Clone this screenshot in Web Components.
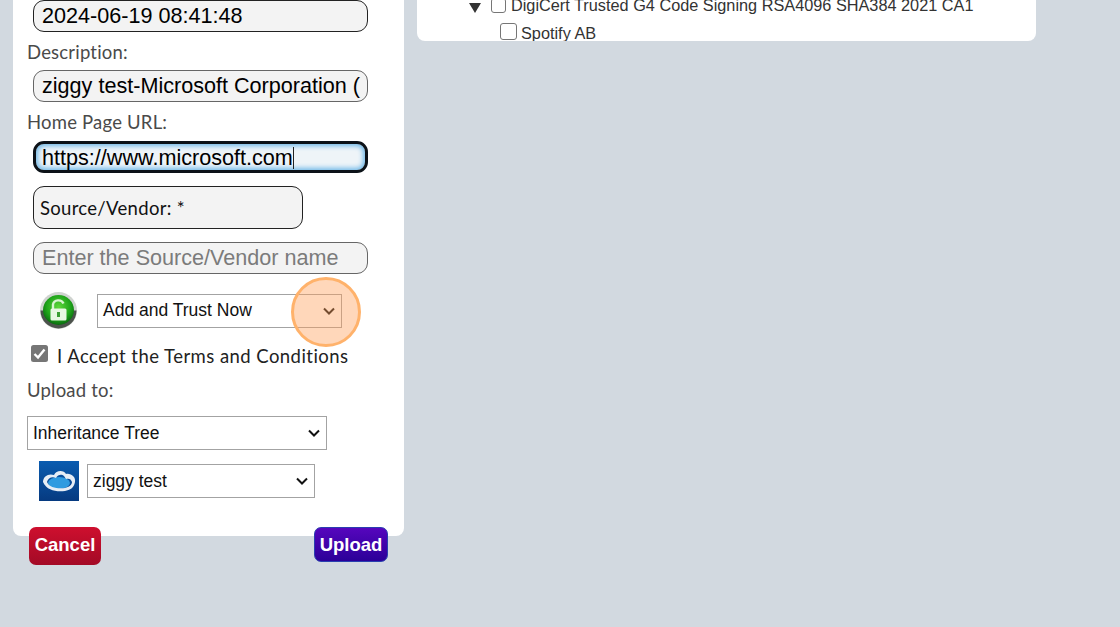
<!DOCTYPE html>
<html>
<head>
<meta charset="utf-8">
<title>Upload</title>
<style>
    html, body { margin: 0; height: 627px; overflow: hidden; background: #d2d9e0; }
</style>
</head>
<body>

<upload-page>
    <upload-form slot="left">
        <text-field style="margin-top:0">2024-06-19 08:41:48</text-field>
        <form-label style="margin-top:9px">Description:</form-label>
        <text-field style="margin-top:7px" muted>ziggy test-Microsoft Corporation (</text-field>
        <form-label style="margin-top:9px">Home Page URL:</form-label>
        <text-field style="margin-top:8px" focused>https://www.microsoft.com</text-field>
        <vendor-box>Source/Vendor: *</vendor-box>
        <text-field style="margin-top:13px" muted placeholder>Enter the Source/Vendor name</text-field>

        <div style="display:flex;align-items:center;height:37px;margin:18px 0 0 12px">
            <lock-icon></lock-icon>
            <pick-list style="width:245px;margin-left:19px" big>Add and Trust Now</pick-list>
        </div>

        <terms-check>I Accept the Terms and Conditions</terms-check>
        <form-label style="margin-top:11px">Upload to:</form-label>
        <pick-list style="width:300px;margin-top:15px">Inheritance Tree</pick-list>

        <div style="display:flex;align-items:center;height:40px;margin:11px 0 0 12px">
            <cloud-icon></cloud-icon>
            <pick-list style="width:228px;margin-left:8px">ziggy test</pick-list>
        </div>

        <div slot="buttons" style="display:flex;justify-content:space-between;align-items:flex-start;margin:27px 16px 0 2px">
            <push-button kind="cancel">Cancel</push-button>
            <push-button kind="upload">Upload</push-button>
        </div>
    </upload-form>

    <cert-tree slot="right">
        <tree-row arrow style="margin-left:52px;margin-top:-9px">DigiCert Trusted G4 Code Signing RSA4096 SHA384 2021 CA1</tree-row>
        <tree-row big style="margin-left:83px;margin-top:2px">Spotify AB</tree-row>
    </cert-tree>
</upload-page>

<click-marker></click-marker>

<script>
class UploadPage extends HTMLElement {
    constructor() {
        super();
        this.shadowDOM = this.attachShadow({mode: "open"});
    }
    connectedCallback() {
        this.shadowDOM.innerHTML = `
        <style>
            :host { display: flex; align-items: flex-start; gap: 13px; padding-left: 13px; }
        </style>
        <slot name="left"></slot>
        <slot name="right"></slot>
        `;
    }
}

class UploadForm extends HTMLElement {
    constructor() {
        super();
        this.shadowDOM = this.attachShadow({mode: "open"});
    }
    connectedCallback() {
        this.shadowDOM.innerHTML = `
        <style>
            :host { display: block; width: 391px; }
            .card {
                box-sizing: border-box;
                height: 536px;
                padding-left: 14px;
                background: #fff;
                border-radius: 0 0 8px 8px;
                display: flex;
                flex-direction: column;
                align-items: flex-start;
            }
            .card ::slotted(*) { flex: none; }
        </style>
        <div class="card"><slot></slot></div>
        <slot name="buttons"></slot>
        `;
        // the buttons hang over the bottom edge of the card
        this.querySelector('[slot="buttons"]').style.margin = "-9px 16px 0 16px";
    }
}

class FormLabel extends HTMLElement {
    constructor() {
        super();
        this.shadowDOM = this.attachShadow({mode: "open"});
    }
    connectedCallback() {
        this.shadowDOM.innerHTML = `
        <style>
            :host {
                display: block;
                height: 22px;
                font: 18.5px/22px Lato, "Open Sans", sans-serif;
                letter-spacing: .2px;
                color: #4a4a4a;
            }
        </style>
        <slot></slot>
        `;
    }
}

class TextField extends HTMLElement {
    constructor() {
        super();
        this.shadowDOM = this.attachShadow({mode: "open"});
    }
    connectedCallback() {
        this.shadowDOM.innerHTML = `
        <style>
            :host {
                display: block;
                box-sizing: border-box;
                width: 335px;
                height: 32px;
                margin-left: 6px;
                padding: 0 8px;
                overflow: hidden;
                white-space: nowrap;
                font: 21.6px/30px "Liberation Sans", Arial, sans-serif;
                color: #000;
                background: #f3f3f3;
                border: 1px solid #222;
                border-radius: 11px;
            }
            :host([muted]) { border-color: #666; }
            :host([placeholder]) { color: #7b7b7b; }
            :host([focused]) {
                border: 3px solid #0c1218;
                padding: 0 6px;
                line-height: 27px;
                background: #eef4f8;
                box-shadow: inset 0 0 5px 2px #6fb8e8;
            }
            .caret { display: inline-block; width: 1px; height: 22px; background: #222; vertical-align: -4px; }
        </style>
        <slot></slot>${this.hasAttribute("focused") ? '<span class="caret"></span>' : ""}
        `;
    }
}

class VendorBox extends HTMLElement {
    constructor() {
        super();
        this.shadowDOM = this.attachShadow({mode: "open"});
    }
    connectedCallback() {
        this.shadowDOM.innerHTML = `
        <style>
            :host {
                display: flex;
                align-items: center;
                box-sizing: border-box;
                width: 270px;
                height: 43px;
                margin: 13px 0 0 6px;
                padding-left: 6px;
                font: 18.5px Lato, "Open Sans", sans-serif;
                letter-spacing: .3px;
                color: #111;
                background: #f3f3f3;
                border: 1px solid #222;
                border-radius: 11px;
            }
        </style>
        <slot></slot>
        `;
    }
}

class PickList extends HTMLElement {
    constructor() {
        super();
        this.shadowDOM = this.attachShadow({mode: "open"});
    }
    connectedCallback() {
        this.shadowDOM.innerHTML = `
        <style>
            :host {
                display: flex;
                align-items: center;
                justify-content: space-between;
                box-sizing: border-box;
                height: 34px;
                padding: 0 4px 0 5px;
                font: 17.5px "Liberation Sans", Arial, sans-serif;
                color: #111;
                background: #fff;
                border: 1px solid #a3a3a3;
            }
            svg { margin-right: 1px; }
        </style>
        <slot></slot>
        <svg width="14" height="10" viewBox="0 0 14 10"><path d="M2 2.5 L7 7.5 L12 2.5" fill="none" stroke="#111" stroke-width="2"/></svg>
        `;
    }
}

class LockIcon extends HTMLElement {
    constructor() {
        super();
        this.shadowDOM = this.attachShadow({mode: "open"});
    }
    connectedCallback() {
        this.shadowDOM.innerHTML = `
        <style>
            :host { display: block; width: 39px; height: 37px; }
            svg { display: block; }
        </style>
        <svg width="39" height="37" viewBox="0 0 39 37">
            <defs>
                <radialGradient id="g" cx="50%" cy="40%" r="60%">
                    <stop offset="0" stop-color="#5fd83c"/>
                    <stop offset=".65" stop-color="#1fa51a"/>
                    <stop offset="1" stop-color="#0a6a10"/>
                </radialGradient>
            </defs>
            <circle cx="19.5" cy="18.5" r="18.5" fill="#cfd3cf"/>
            <path d="M1.5 18.5 A18 18 0 0 0 37.5 18.5 L34 18.5 A15 15 0 0 1 5 18.5 Z" fill="#4c524c"/>
            <ellipse cx="19.5" cy="18" rx="15.5" ry="15" fill="url(#g)"/>
            <path d="M14 17 V12.5 A5.5 5 0 0 1 24.5 11.5" fill="none" stroke="#d8f5d0" stroke-width="2.4"/>
            <rect x="11.5" y="16.5" width="16" height="12" rx="1.5" fill="#e8f8e2"/>
            <rect x="18" y="20" width="3" height="5" fill="#3c9e34"/>
        </svg>
        `;
    }
}

class CloudIcon extends HTMLElement {
    constructor() {
        super();
        this.shadowDOM = this.attachShadow({mode: "open"});
    }
    connectedCallback() {
        this.shadowDOM.innerHTML = `
        <style>
            :host { display: block; width: 40px; height: 40px; }
            svg { display: block; }
        </style>
        <svg width="40" height="40" viewBox="0 0 40 40">
            <defs>
                <linearGradient id="b" x1="0" y1="0" x2="0" y2="1">
                    <stop offset="0" stop-color="#0a5cb0"/>
                    <stop offset="1" stop-color="#063a80"/>
                </linearGradient>
            </defs>
            <rect width="40" height="40" fill="url(#b)"/>
            <ellipse cx="20" cy="22" rx="11" ry="6" fill="#2f9be0"/>
            <path d="M4 21 C4 15 10 12 15 14 C17 9 25 9 27 13 C32 12 37 16 36 21 C35 27 31 29 26 30 C18 31 8 30 4 21 Z M8 21 C10 27 20 28 26 27 C30 26 33 24 33 21 C32 18 30 17 27 18 L25 15 C23 13 19 13 17 17 C13 15 9 17 8 21 Z" fill="#e6edf5" fill-rule="evenodd"/>
        </svg>
        `;
    }
}

class TermsCheck extends HTMLElement {
    constructor() {
        super();
        this.shadowDOM = this.attachShadow({mode: "open"});
    }
    connectedCallback() {
        this.shadowDOM.innerHTML = `
        <style>
            :host {
                display: flex;
                align-items: center;
                gap: 9px;
                height: 24px;
                margin: 15px 0 0 4px;
                font: 18.5px/24px Lato, "Open Sans", sans-serif;
                letter-spacing: .45px;
                color: #222;
                white-space: nowrap;
            }
            svg { margin-top: -5px; flex: none; }
        </style>
        <svg width="17" height="17" viewBox="0 0 17 17">
            <rect width="17" height="17" rx="2.5" fill="#767676"/>
            <path d="M3.5 9 L7 12.5 L13.5 4.5" fill="none" stroke="#fff" stroke-width="2.4"/>
        </svg>
        <slot></slot>
        `;
    }
}

class PushButton extends HTMLElement {
    constructor() {
        super();
        this.shadowDOM = this.attachShadow({mode: "open"});
    }
    connectedCallback() {
        this.shadowDOM.innerHTML = `
        <style>
            :host {
                display: flex;
                align-items: center;
                justify-content: center;
                box-sizing: border-box;
                font: bold 18.5px "Liberation Sans", Arial, sans-serif;
                color: #fff;
                border-radius: 7px;
            }
            :host([kind="cancel"]) {
                width: 72px;
                height: 38px;
                padding-bottom: 3px;
                background: linear-gradient(#ce0f2e, #a30a26);
            }
            :host([kind="upload"]) {
                width: 74px;
                height: 35px;
                background: linear-gradient(#5606bd, #2b0098);
                border: 1px solid #2a3fb0;
            }
        </style>
        <slot></slot>
        `;
    }
}

class CertTree extends HTMLElement {
    constructor() {
        super();
        this.shadowDOM = this.attachShadow({mode: "open"});
    }
    connectedCallback() {
        this.shadowDOM.innerHTML = `
        <style>
            :host {
                display: block;
                box-sizing: border-box;
                width: 619px;
                height: 41px;
                overflow: hidden;
                background: #fff;
                border-radius: 0 0 8px 8px;
            }
        </style>
        <slot></slot>
        `;
    }
}

class TreeRow extends HTMLElement {
    constructor() {
        super();
        this.shadowDOM = this.attachShadow({mode: "open"});
    }
    connectedCallback() {
        const arrow = this.hasAttribute("arrow")
            ? '<svg class="arrow" width="12" height="10" viewBox="0 0 12 10"><path d="M0 0 H12 L6 10 Z" fill="#333"/></svg>'
            : "";
        this.shadowDOM.innerHTML = `
        <style>
            :host {
                display: flex;
                align-items: center;
                height: 28px;
                font: 16.3px "Liberation Sans", Arial, sans-serif;
                color: #333;
                white-space: nowrap;
            }
            :host([big]) { height: 24px; }
            .arrow { margin: 5px 10px 0 0; flex: none; }
            .box {
                box-sizing: border-box;
                flex: none;
                width: 15px;
                height: 15px;
                margin-right: 5px;
                background: #fff;
                border: 1px solid #767676;
                border-radius: 3px;
            }
            :host([big]) .box { width: 17px; height: 17px; margin: -3px 4px 0 0; }
        </style>
        ${arrow}<span class="box"></span><slot></slot>
        `;
    }
}

class ClickMarker extends HTMLElement {
    constructor() {
        super();
        this.shadowDOM = this.attachShadow({mode: "open"});
    }
    connectedCallback() {
        // tutorial highlight laid over the dropdown arrow
        this.shadowDOM.innerHTML = `
        <style>
            :host {
                position: absolute;
                left: 291px;
                top: 277px;
                width: 70px;
                height: 70px;
                box-sizing: border-box;
                border: 3px solid #ffb26b;
                border-radius: 50%;
                background: rgba(255, 160, 90, .42);
            }
        </style>
        `;
    }
}

customElements.define("upload-page", UploadPage);
customElements.define("upload-form", UploadForm);
customElements.define("form-label", FormLabel);
customElements.define("text-field", TextField);
customElements.define("vendor-box", VendorBox);
customElements.define("pick-list", PickList);
customElements.define("lock-icon", LockIcon);
customElements.define("cloud-icon", CloudIcon);
customElements.define("terms-check", TermsCheck);
customElements.define("push-button", PushButton);
customElements.define("cert-tree", CertTree);
customElements.define("tree-row", TreeRow);
customElements.define("click-marker", ClickMarker);
</script>
</body>
</html>
